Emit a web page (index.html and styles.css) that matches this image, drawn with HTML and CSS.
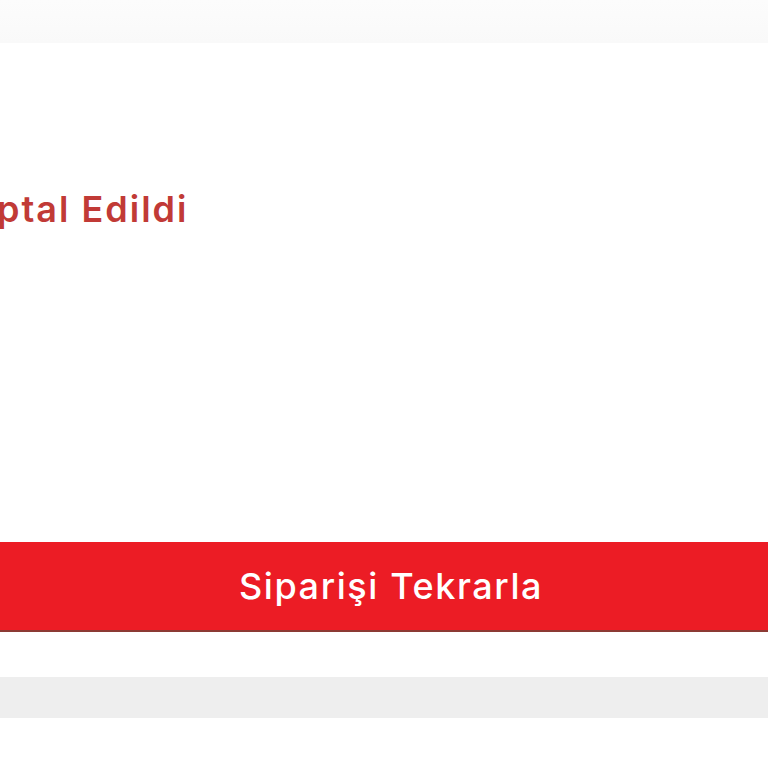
FILE: index.html
```html
<!DOCTYPE html>
<html lang="tr">
<head>
<meta charset="utf-8">
<title>Sipariş Detayı</title>
<link rel="stylesheet" href="styles.css">
</head>
<body>
<div class="topband"></div>
<main class="card">
  <div class="status">
    <span class="status-text">İptal Edildi</span>
  </div>
  <div class="spacer"></div>
  <button class="reorder" type="button">Siparişi Tekrarla</button>
</main>
<div class="gap"></div>
<div class="grayband"></div>
</body>
</html>
```
FILE: styles.css
```css
html, body {
  margin: 0;
  padding: 0;
  background: #ffffff;
  overflow: hidden;
}
body {
  width: 768px;
  height: 768px;
  font-family: Inter, "Open Sans", "Liberation Sans", sans-serif;
}
.topband {
  height: 43px;
  background: linear-gradient(#fcfcfc, #f9f9f9);
}
.card {
  background: #ffffff;
  height: 589px;
  display: flex;
  flex-direction: column;
}
.status {
  padding-top: 144px;
  margin-left: -15px;
  height: 44px;
}
.status-text {
  font-size: 36px;
  font-weight: 600;
  color: #c13a36;
  line-height: 44px;
  letter-spacing: 2px;
  white-space: nowrap;
}
.spacer {
  flex: 1;
}
.reorder {
  display: block;
  width: 100%;
  height: 90px;
  margin: 0;
  border: none;
  border-bottom: 2px solid #8c3a34;
  background: #ec1c25;
  color: #ffffff;
  font-family: Inter, "Open Sans", "Liberation Sans", sans-serif;
  font-size: 36px;
  font-weight: 500;
  letter-spacing: 1.6px;
  padding: 0 0 0 14px;
  cursor: pointer;
}
.gap {
  height: 45px;
}
.grayband {
  height: 41px;
  background: #eeeeee;
}
```
